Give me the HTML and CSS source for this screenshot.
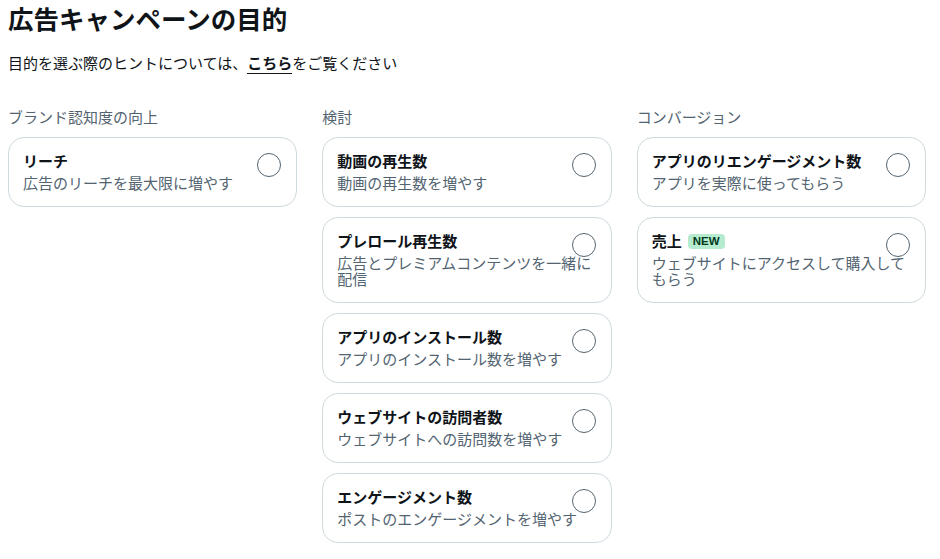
FILE: index.html
```html
<!DOCTYPE html>
<html lang="ja">
<head>
<meta charset="utf-8">
<link rel="stylesheet" href="styles.css">
</head>
<body>
<div class="page">
  <h1 class="title">広告キャンペーンの目的</h1>
  <p class="sub">目的を選ぶ際のヒントについては、<a class="link" href="#">こちら</a>をご覧ください</p>
  <div class="cols">
    <section class="col">
      <h2 class="heading">ブランド認知度の向上</h2>
      <div class="card">
        <div class="ctitle">リーチ</div>
        <div class="cdesc">広告のリーチを最大限に増やす</div>
        <span class="radio"></span>
      </div>
    </section>
    <section class="col">
      <h2 class="heading">検討</h2>
      <div class="card">
        <div class="ctitle">動画の再生数</div>
        <div class="cdesc">動画の再生数を増やす</div>
        <span class="radio"></span>
      </div>
      <div class="card">
        <div class="ctitle">プレロール再生数</div>
        <div class="cdesc">広告とプレミアムコンテンツを一緒に配信</div>
        <span class="radio"></span>
      </div>
      <div class="card">
        <div class="ctitle">アプリのインストール数</div>
        <div class="cdesc">アプリのインストール数を増やす</div>
        <span class="radio"></span>
      </div>
      <div class="card">
        <div class="ctitle">ウェブサイトの訪問者数</div>
        <div class="cdesc">ウェブサイトへの訪問数を増やす</div>
        <span class="radio"></span>
      </div>
      <div class="card">
        <div class="ctitle">エンゲージメント数</div>
        <div class="cdesc">ポストのエンゲージメントを増やす</div>
        <span class="radio"></span>
      </div>
    </section>
    <section class="col">
      <h2 class="heading">コンバージョン</h2>
      <div class="card">
        <div class="ctitle">アプリのリエンゲージメント数</div>
        <div class="cdesc">アプリを実際に使ってもらう</div>
        <span class="radio"></span>
      </div>
      <div class="card">
        <div class="ctitle">売上 <span class="badge">NEW</span></div>
        <div class="cdesc">ウェブサイトにアクセスして購入してもらう</div>
        <span class="radio"></span>
      </div>
    </section>
  </div>
</div>
</body>
</html>
```
FILE: styles.css
```css
* { box-sizing: border-box; }
html, body { margin: 0; padding: 0; background: #fff; }
body {
  font-family: "Noto Sans CJK JP", "Noto Sans", sans-serif;
  color: #0f1419;
}
.page { padding: 2px 0 0 8px; }
.title {
  margin: 0;
  font-size: 25.5px;
  line-height: 32px;
  font-weight: 700;
}
.sub {
  margin: 19px 0 0 0;
  font-size: 15px;
  line-height: 20px;
}
.link {
  color: #0f1419;
  font-weight: 700;
  text-decoration: none;
  border-bottom: 1px solid #0f1419;
}
.cols {
  margin-top: 34px;
  width: 918px;
  display: grid;
  grid-template-columns: repeat(3, 1fr);
  column-gap: 25px;
  align-items: start;
}
.col { display: flex; flex-direction: column; gap: 10px; }
.heading {
  margin: 0;
  font-size: 15px;
  line-height: 20px;
  font-weight: 400;
  color: #536471;
}
.card {
  position: relative;
  border: 1px solid #cfd9de;
  border-radius: 16px;
  padding: 13px 14px 15px 14px;
}
.ctitle {
  font-size: 15px;
  line-height: 20px;
  font-weight: 700;
  color: #0f1419;
  display: flex;
  align-items: center;
  gap: 4px;
}
.cdesc {
  margin-top: 4px;
  font-size: 15px;
  line-height: 16px;
  color: #536471;
}
.radio {
  position: absolute;
  top: 15px;
  right: 15px;
  width: 24px;
  height: 24px;
  border: 1px solid #536471;
  border-radius: 50%;
}
.badge {
  display: inline-block;
  background: #b5ebcf;
  color: #00391c;
  font-family: "Liberation Sans", "Noto Sans", sans-serif;
  font-size: 11.5px;
  line-height: 15px;
  font-weight: 700;
  padding: 0 5px;
  border-radius: 4px;
  margin-left: 2px;
}
```
